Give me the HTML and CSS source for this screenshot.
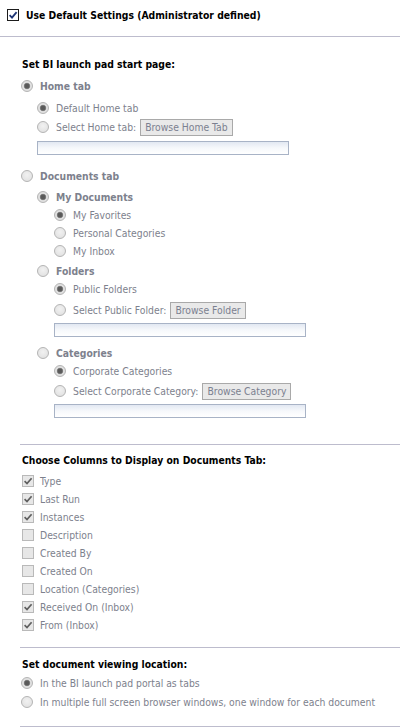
FILE: index.html
```html
<!DOCTYPE html>
<html>
<head>
<meta charset="utf-8">
<link rel="stylesheet" href="styles.css">
</head>
<body>
<div class="page">
  <div class="row top">
    <span class="cb cb-main"><svg viewBox="0 0 10 10"><path d="M1.6 5.2 L4 7.6 L8.6 2.2" fill="none" stroke="#1f3676" stroke-width="1.8"/></svg></span>
    <span>Use Default Settings (Administrator defined)</span>
  </div>
  <hr class="sep sep-top">

  <section class="sec sec-start">
    <div class="row heading">Set BI launch pad start page:</div>
    <div class="row opt strong g-home"><span class="rb on"></span>Home tab</div>
    <div class="lvl1">
      <div class="row opt g-a"><span class="rb on"></span>Default Home tab</div>
      <div class="row opt g-b"><span class="rb"></span>Select Home tab:<span class="btn">Browse Home Tab</span></div>
      <div class="field f-home"></div>
    </div>

    <div class="row opt strong g-docs"><span class="rb"></span>Documents tab</div>
    <div class="lvl1">
      <div class="row opt strong g-mydocs"><span class="rb on"></span>My Documents</div>
      <div class="lvl2">
        <div class="row opt"><span class="rb on"></span>My Favorites</div>
        <div class="row opt"><span class="rb"></span>Personal Categories</div>
        <div class="row opt"><span class="rb"></span>My Inbox</div>
      </div>
      <div class="row opt strong g-folders"><span class="rb"></span>Folders</div>
      <div class="lvl2">
        <div class="row opt"><span class="rb on"></span>Public Folders</div>
        <div class="row opt g-sel"><span class="rb"></span>Select Public Folder:<span class="btn">Browse Folder</span></div>
        <div class="field"></div>
      </div>
      <div class="row opt strong g-cats"><span class="rb"></span>Categories</div>
      <div class="lvl2">
        <div class="row opt"><span class="rb on"></span>Corporate Categories</div>
        <div class="row opt g-sel2"><span class="rb"></span>Select Corporate Category:<span class="btn">Browse Category</span></div>
        <div class="field"></div>
      </div>
    </div>
  </section>
  <hr class="sep sep-mid1">

  <section class="sec sec-cols">
    <div class="row heading">Choose Columns to Display on Documents Tab:</div>
    <div class="checks">
      <div class="row chk"><span class="cb"><svg viewBox="0 0 10 10"><path d="M1.6 5.2 L4 7.6 L8.6 2.2" fill="none" stroke="#5f5f5f" stroke-width="1.7"/></svg></span>Type</div>
      <div class="row chk"><span class="cb"><svg viewBox="0 0 10 10"><path d="M1.6 5.2 L4 7.6 L8.6 2.2" fill="none" stroke="#5f5f5f" stroke-width="1.7"/></svg></span>Last Run</div>
      <div class="row chk"><span class="cb"><svg viewBox="0 0 10 10"><path d="M1.6 5.2 L4 7.6 L8.6 2.2" fill="none" stroke="#5f5f5f" stroke-width="1.7"/></svg></span>Instances</div>
      <div class="row chk"><span class="cb"></span>Description</div>
      <div class="row chk"><span class="cb"></span>Created By</div>
      <div class="row chk"><span class="cb"></span>Created On</div>
      <div class="row chk"><span class="cb"></span>Location (Categories)</div>
      <div class="row chk"><span class="cb"><svg viewBox="0 0 10 10"><path d="M1.6 5.2 L4 7.6 L8.6 2.2" fill="none" stroke="#5f5f5f" stroke-width="1.7"/></svg></span>Received On (Inbox)</div>
      <div class="row chk"><span class="cb"><svg viewBox="0 0 10 10"><path d="M1.6 5.2 L4 7.6 L8.6 2.2" fill="none" stroke="#5f5f5f" stroke-width="1.7"/></svg></span>From (Inbox)</div>
    </div>
  </section>
  <hr class="sep sep-mid2">

  <section class="sec sec-view">
    <div class="row heading">Set document viewing location:</div>
    <div class="views">
      <div class="row opt"><span class="rb on"></span>In the BI launch pad portal as tabs</div>
      <div class="row opt"><span class="rb"></span>In multiple full screen browser windows, one window for each document</div>
    </div>
  </section>
  <hr class="sep sep-bottom">
</div>
</body>
</html>
```

FILE: styles.css
```css
* { box-sizing: border-box; }

body {
  margin: 0;
  background: #ffffff;
  font-family: "DejaVu Sans Condensed", "DejaVu Sans", sans-serif;
  font-size: 10.3px;
  color: #7d818d;
}

.page {
  width: 400px;
}

.row {
  display: flex;
  align-items: center;
  height: 18px;
  white-space: nowrap;
}

.top {
  margin-top: 6px;
  padding-left: 7px;
  color: #000;
  font-weight: bold;
}

.sep {
  border: 0;
  border-top: 1px solid #bdbccd;
  margin: 0;
}
.sep-top { margin-top: 12px; }
.sep-mid1 { margin: 26px 0 0 20px; }
.sep-mid2 { margin: 13px 0 0 20px; }
.sep-bottom { margin: 15px 0 0 20px; }

.sec {
  padding-left: 21px;
}
.sec-start { margin-top: 18px; }
.sec-cols { margin-top: 6px; }
.sec-view { margin-top: 7px; }

.heading {
  color: #000;
  font-weight: bold;
  padding-left: 1px;
}

.strong { font-weight: bold; }

.lvl1 { padding-left: 16px; }
.lvl2 { padding-left: 17px; }

.g-home { margin-top: 4px; }
.g-a { margin-top: 4px; }
.g-b { margin-top: 1px; }
.g-docs { margin-top: 12px; }
.g-mydocs { margin-top: 3px; }
.g-folders { margin-top: 2px; }
.g-sel { margin-top: 3px; }
.g-cats { margin-top: 7px; }
.g-sel2 { margin-top: 2px; }

.rb {
  flex: none;
  width: 12px;
  height: 12px;
  margin-right: 7px;
  border-radius: 50%;
  border: 1px solid #b4b4b4;
  background: radial-gradient(circle at 50% 40%, #f1f1f1 0, #dedede 100%);
}
.rb.on {
  background: radial-gradient(circle at 50% 50%, #575757 0, #5c5c5c 2.1px, #8a8a8a 2.9px, #e2e2e2 3.6px, #dadada 100%);
}

.cb {
  flex: none;
  display: flex;
  align-items: center;
  justify-content: center;
  width: 12px;
  height: 12px;
  margin-right: 6px;
  border: 1px solid #b9b9b9;
  background: #e7e7e7;
}
.cb svg {
  width: 10px;
  height: 10px;
}
.cb-main {
  border-color: #1c1c1c;
  background: #ffffff;
  margin-right: 7px;
}

.checks { margin-top: 3px; padding-left: 1px; }
.views { margin-top: 1px; display: flex; flex-direction: column; gap: 1px; }

.btn {
  display: flex;
  align-items: center;
  height: 17px;
  margin-left: 4px;
  padding: 0 4px;
  border: 1px solid #a9a9a9;
  background: #e9e9e9;
  color: #7b8090;
}

.field {
  width: 252px;
  height: 14px;
  margin-top: 5px;
  border: 1px solid #a8b3c6;
  background: linear-gradient(#e2e8f2 0, #f6f8fb 50%, #ffffff 100%);
}
.lvl2 .field { margin-top: 4px; }
```
